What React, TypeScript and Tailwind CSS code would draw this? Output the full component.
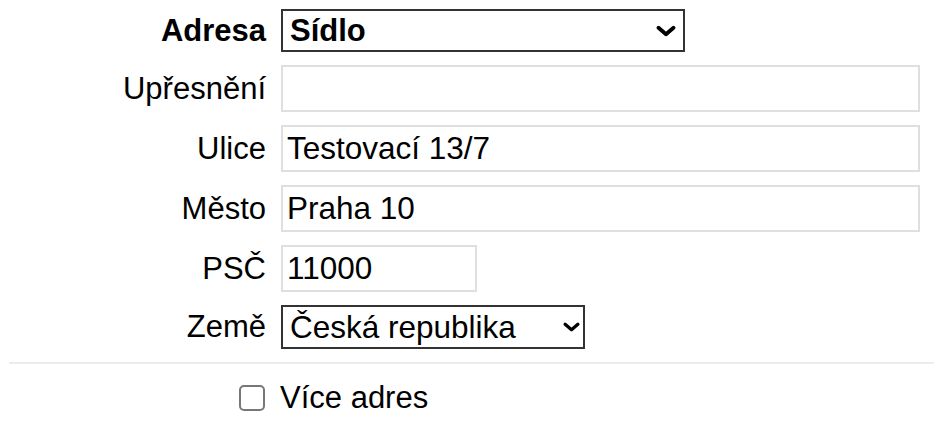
import type { ReactNode } from "react";

const font = "font-[family-name:'Liberation_Sans',Helvetica,Arial,sans-serif]";

function Chevron({ w, h }: { w: number; h: number }) {
  return (
    <svg
      width={w}
      height={h}
      viewBox="0 0 20 11"
      fill="none"
      stroke="currentColor"
      strokeWidth="3.8"
      strokeLinecap="round"
      strokeLinejoin="round"
      className="pointer-events-none absolute right-0 top-1/2 -translate-y-1/2"
    >
      <path d="M2.5 2.2 10 8.8 17.5 2.2" />
    </svg>
  );
}

function Row({ label, bold, children }: { label: string; bold?: boolean; children: ReactNode }) {
  return (
    <div className="flex items-center">
      <label
        className={`w-[266px] shrink-0 text-right text-[31px] leading-[1.15] text-black ${bold ? "font-bold" : ""}`}
      >
        {label}
      </label>
      <div className="ml-[15px] flex-1">{children}</div>
    </div>
  );
}

export default function App() {
  const inputCls =
    "block h-[47px] rounded-none border-2 border-[#dfdfdf] bg-white px-[4px] text-[31.5px] leading-[1.15] text-black outline-none";

  return (
    <div className={`${font} w-[934px] h-[432px] bg-white pt-[9px]`}>
      <div className="flex flex-col gap-[13px]">
        <Row label="Adresa" bold>
          <div className="relative w-[404px]">
            <select
              defaultValue="sidlo"
              className="block h-[43px] w-full appearance-none rounded-none border-2 border-[#333] bg-white pl-[7px] text-[31px] leading-[1.15] font-bold text-black outline-none"
            >
              <option value="sidlo">Sídlo</option>
              <option value="provozovna">Provozovna</option>
            </select>
            <span className="pointer-events-none absolute right-[9px] top-0 h-full w-[20px]">
              <Chevron w={20} h={11} />
            </span>
          </div>
        </Row>
        <Row label="Upřesnění">
          <input type="text" defaultValue="" className={`${inputCls} w-[639px]`} />
        </Row>
        <Row label="Ulice">
          <input type="text" defaultValue="Testovací 13/7" className={`${inputCls} w-[639px]`} />
        </Row>
        <Row label="Město">
          <input type="text" defaultValue="Praha 10" className={`${inputCls} w-[639px]`} />
        </Row>
        <Row label="PSČ">
          <input type="text" defaultValue="11000" className={`${inputCls} w-[196px]`} />
        </Row>
        <Row label="Země">
          <div className="relative w-[304px]">
            <select
              defaultValue="cz"
              className="block h-[44px] w-full appearance-none rounded-none border-2 border-[#333] bg-white pl-[7px] text-[31.5px] leading-[1.15] text-black outline-none"
            >
              <option value="cz">Česká republika</option>
              <option value="sk">Slovensko</option>
            </select>
            <span className="pointer-events-none absolute right-[5px] top-0 h-full w-[17px]">
              <Chevron w={17} h={10} />
            </span>
          </div>
        </Row>
      </div>

      <hr className="mt-[13px] ml-[9px] border-0 border-t-2 border-[#ececec]" />

      <div className="mt-[16px] flex items-center pl-[239px]">
        <input
          type="checkbox"
          id="vice"
          className="m-0 size-[26px] shrink-0 appearance-none rounded-[5px] border-2 border-[#777] bg-white"
        />
        <label htmlFor="vice" className="ml-[15px] text-[31px] leading-[1.15] text-black">
          Více adres
        </label>
      </div>
    </div>
  );
}
